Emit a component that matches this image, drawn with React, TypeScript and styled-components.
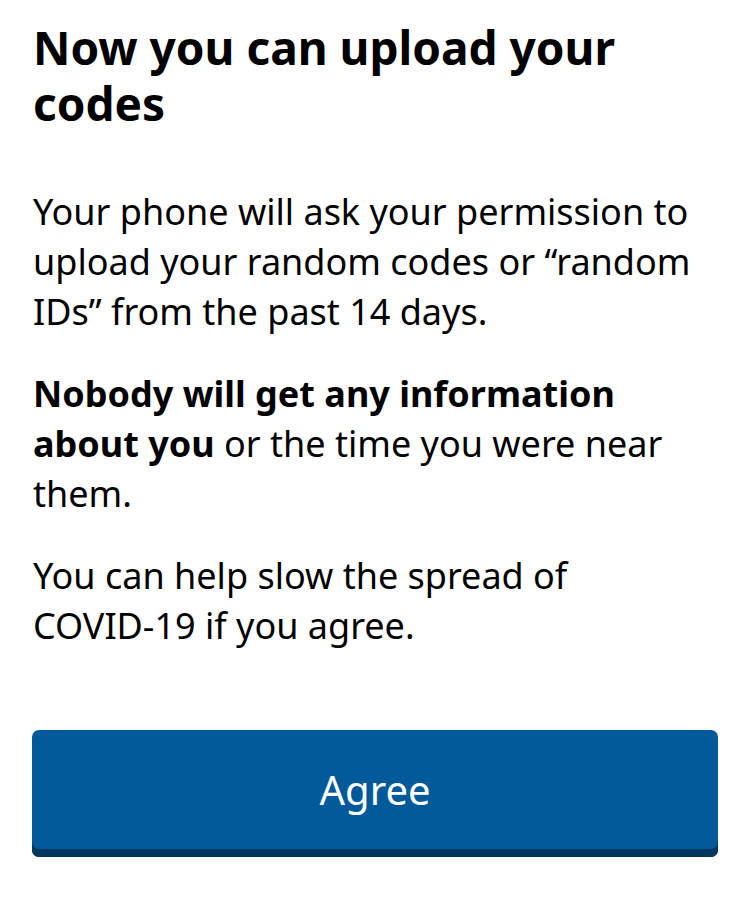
import React from "react";
import styled, { createGlobalStyle } from "styled-components";

const Global = createGlobalStyle`
  html, body { margin: 0; padding: 0; background: #ffffff; }
  body { font-family: "Noto Sans", "Open Sans", sans-serif; color: #000000; }
`;

const Page = styled.main`
  box-sizing: border-box;
  width: 750px;
  padding: 19px 32px 40px 33px;
  display: flex;
  flex-direction: column;
`;

const Title = styled.h1`
  margin: 0 0 56px;
  font-size: 46px;
  line-height: 56px;
  font-weight: 700;
  color: #000;
`;

const Para = styled.p`
  margin: 0 0 32px;
  font-size: 36px;
  line-height: 50px;
  font-weight: 400;
  color: #000;
`;

const Strong = styled.strong`
  font-weight: 700;
`;

const NoBreak = styled.span`
  white-space: nowrap;
`;

const AgreeButton = styled.button`
  margin-top: 47px;
  margin-left: -1px;
  height: 127px;
  width: 686px;
  border: none;
  border-radius: 7px;
  background: #005a9a;
  box-shadow: inset 0 -8px 0 #00365f;
  color: #ffffff;
  font-family: "Noto Sans", "Open Sans", sans-serif;
  font-size: 40px;
  padding: 0 0 8px;
  cursor: pointer;
`;

export default function App() {
  return (
    <>
      <Global />
      <Page>
        <Title>Now you can upload your codes</Title>
        <Para>
          Your phone will ask your permission to upload your random codes or
          “random IDs” from the past 14 days.
        </Para>
        <Para>
          <Strong>Nobody will get any information about you</Strong> or the
          time you were near them.
        </Para>
        <Para>
          You can help slow the spread of <NoBreak>COVID-19</NoBreak> if you
          agree.
        </Para>
        <AgreeButton>Agree</AgreeButton>
      </Page>
    </>
  );
}
